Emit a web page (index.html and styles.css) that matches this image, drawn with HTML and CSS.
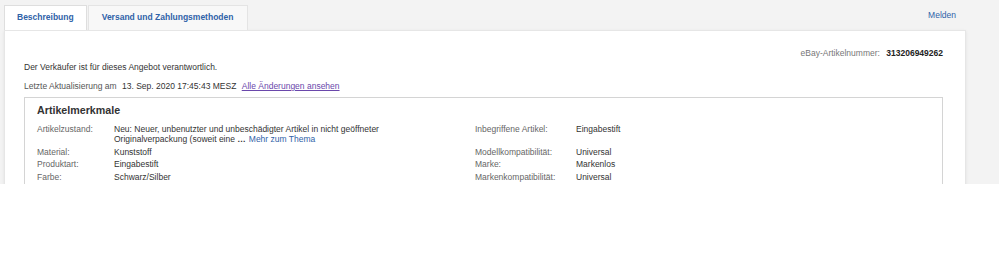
FILE: index.html
```html
<!DOCTYPE html>
<html lang="de">
<head>
    <meta charset="UTF-8">
    <meta name="viewport" content="width=device-width, initial-scale=1.0">
    <title>Artikelbeschreibung</title>
    <link rel="stylesheet" href="styles.css">
</head>
<body>
    <div class="page">
        <!-- Reiter -->
        <div class="tabs">
            <div class="tab active">Beschreibung</div>
            <div class="tab">Versand und Zahlungsmethoden</div>
            <a class="report" href="#">Melden</a>
        </div>

        <div class="card">
            <div class="itemnum">
                <span class="itemnum-label">eBay-Artikelnummer:</span>
                <span class="itemnum-value">313206949262</span>
            </div>
            <p class="seller">Der Verkäufer ist für dieses Angebot verantwortlich.</p>
            <p class="updated">
                Letzte Aktualisierung am
                <span class="date">13. Sep. 2020 17:45:43 MESZ</span>
                <a class="changes" href="#">Alle Änderungen ansehen</a>
            </p>

            <!-- Artikelmerkmale -->
            <div class="specs">
                <h2>Artikelmerkmale</h2>
                <div class="specs-grid">
                    <div class="label">Artikelzustand:</div>
                    <div class="value wide">Neu: Neuer, unbenutzter und unbeschädigter Artikel in nicht geöffneter Originalverpackung (soweit eine <span class="ellipsis">…</span><a class="more" href="#">Mehr zum Thema</a></div>
                    <div class="label">Inbegriffene Artikel:</div>
                    <div class="value">Eingabestift</div>

                    <div class="label">Material:</div>
                    <div class="value">Kunststoff</div>
                    <div class="label">Modellkompatibilität:</div>
                    <div class="value">Universal</div>

                    <div class="label">Produktart:</div>
                    <div class="value">Eingabestift</div>
                    <div class="label">Marke:</div>
                    <div class="value">Markenlos</div>

                    <div class="label">Farbe:</div>
                    <div class="value">Schwarz/Silber</div>
                    <div class="label">Markenkompatibilität:</div>
                    <div class="value">Universal</div>
                </div>
            </div>
        </div>
    </div>
</body>
</html>
```

FILE: styles.css
```css
* {
    margin: 0;
    padding: 0;
    box-sizing: border-box;
}

body {
    background: #fff;
    font-family: 'Liberation Sans', Arial, sans-serif;
    font-size: 8.5px;
    color: #333;
}

a {
    text-decoration: none;
}

.page {
    height: 184px;
    overflow: hidden;
    background: #f3f3f3;
    padding: 5px 33px 0 4px;
}

/* Reiter */
.tabs {
    display: flex;
    align-items: flex-end;
    height: 25px;
}

.tab {
    height: 25px;
    line-height: 22px;
    padding: 0 12px;
    font-weight: bold;
    color: #2f62a8;
    background: #f8f8f8;
    border: 1px solid #e4e4e4;
    border-bottom: none;
    margin-right: 1px;
}

.tab.active {
    background: #fff;
    border-color: #dedede;
    position: relative;
    z-index: 1;
}

.tab:not(.active) {
    padding: 0 14px 0 13px;
}

.report {
    margin-left: auto;
    align-self: flex-start;
    line-height: 20px;
    padding-right: 10px;
    color: #2f62a8;
}

/* Karte */
.card {
    background: #fff;
    height: 200px;
    border: 1px solid #e6e6e6;
    box-shadow: 0 1px 3px rgba(0, 0, 0, 0.08);
    padding: 17px 22px 0 19px;
}

.itemnum {
    text-align: right;
    line-height: 10px;
}

.itemnum-label {
    color: #777;
    margin-right: 4px;
}

.itemnum-value {
    font-weight: bold;
    color: #222;
}

.seller {
    line-height: 10px;
    margin-top: 4px;
}

.updated {
    line-height: 10px;
    margin-top: 9px;
    color: #555;
}

.date {
    margin-left: 3px;
    color: #333;
}

.changes {
    color: #6a47ab;
    text-decoration: underline;
    margin-left: 3px;
}

/* Artikelmerkmale */
.specs {
    border: 1px solid #d4d4d4;
    margin-top: 6px;
    padding: 5.5px 12px 10px;
}

.specs h2 {
    font-size: 10.7px;
    line-height: 13px;
    font-weight: bold;
    color: #333;
}

.specs-grid {
    display: grid;
    grid-template-columns: 77px 361px 101px 1fr;
    row-gap: 2.5px;
    margin-top: 7.5px;
    line-height: 10px;
}

.label {
    color: #666;
}

.value {
    color: #333;
}

.value.wide {
    padding-right: 50px;
}

.ellipsis {
    font-weight: bold;
    margin-right: 3px;
}

.more {
    color: #2f62a8;
}
```
